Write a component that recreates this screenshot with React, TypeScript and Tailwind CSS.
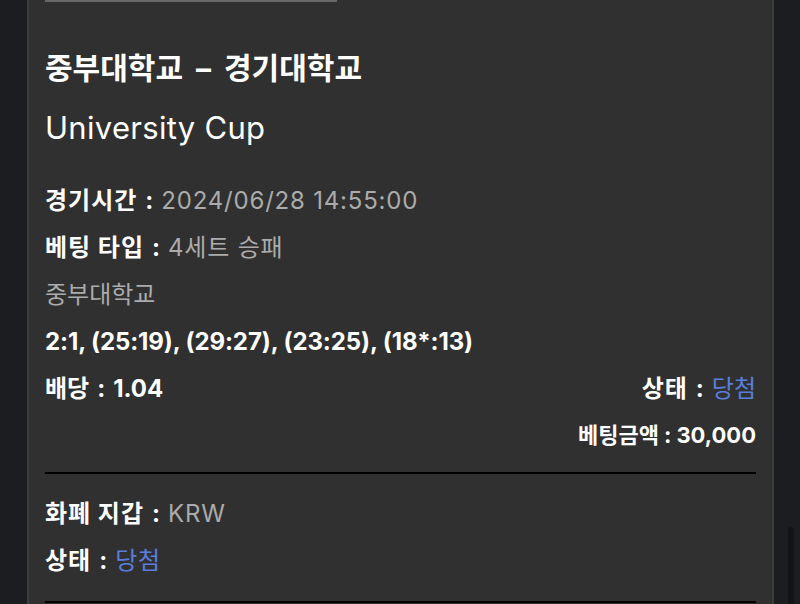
import React from "react";

const font = { fontFamily: 'Inter, "Noto Sans CJK KR", sans-serif' };

function Colon() {
  return <span className="mx-[8px] font-bold text-white">:</span>;
}

function Row({ label, value, valueClass = "text-[#ababab]" }: { label: string; value: string; valueClass?: string }) {
  return (
    <div className="h-[47px] text-[24px] leading-[47px]">
      <span className="font-bold tracking-[1px] text-white">{label}</span>
      <Colon />
      <span className={`tracking-[0.8px] ${valueClass}`}>{value}</span>
    </div>
  );
}

export default function App() {
  return (
    <div className="flex h-[604px] w-[800px] overflow-hidden bg-[#1c1d20]" style={font}>
      {/* left gutter */}
      <div className="w-[27px] shrink-0" />

      {/* main card */}
      <div className="w-[747px] shrink-0 border-x-2 border-[#3c3c3c] bg-[#303030] px-[16px]">
        <div className="h-[2px] w-[292px] bg-[#666666]" />

        <div className="mt-[46px] h-[40px] text-[30px] font-bold leading-[40px] text-white">
          중부대학교<span className="mx-[13px]">–</span>경기대학교
        </div>
        <div className="mt-[20px] h-[40px] text-[31px] tracking-[0.3px] leading-[40px] text-white">University Cup</div>

        <div className="mt-[29px]">
          <Row label="경기시간" value="2024/06/28 14:55:00" />
          <Row label="베팅 타입" value="4세트 승패" />
          <div className="h-[47px] text-[24px] leading-[47px] text-[#ababab]">중부대학교</div>
          <div className="h-[47px] text-[24px] font-bold tracking-[-0.1px] leading-[47px] text-white">
            2:1, (25:19), (29:27), (23:25), (18*:13)
          </div>
          <div className="flex h-[47px] justify-between text-[24px] leading-[47px]">
            <span className="font-bold text-white">
              배당<Colon />1.04
            </span>
            <span>
              <span className="font-bold tracking-[1px] text-white">상태</span>
              <Colon />
              <span className="text-[#5a7edb]">당첨</span>
            </span>
          </div>
          <div className="h-[47px] text-right text-[22px] font-bold leading-[47px] text-white">
            베팅금액<span className="mx-[5px]">:</span>30,000
          </div>
        </div>

        <div className="mt-[13px] h-[2px] bg-black" />

        <div className="mt-[16px]">
          <Row label="화폐 지갑" value="KRW" />
          <Row label="상태" value="당첨" valueClass="text-[#5a7edb]" />
        </div>

        <div className="mt-[17px] h-[2px] bg-black" />
      </div>

      {/* right gutter with scrollbar */}
      <div className="flex w-[26px] shrink-0 justify-end pr-[6px]">
        <div className="mt-[527px] h-[90px] w-[6px] rounded-full bg-[#131416]" />
      </div>
    </div>
  );
}
